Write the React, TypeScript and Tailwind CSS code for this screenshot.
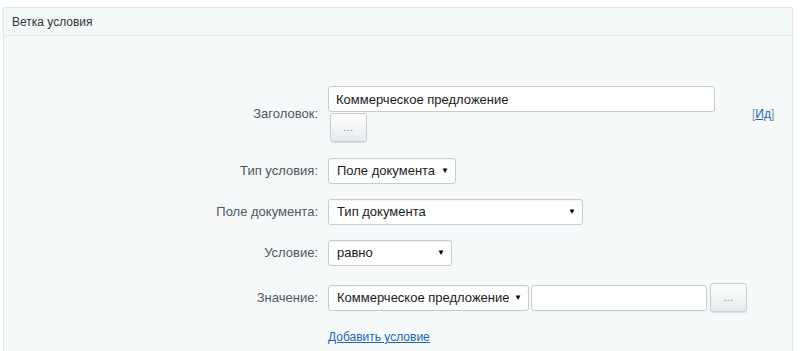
import React from 'react';

const font = { fontFamily: '"Liberation Sans", Arial, sans-serif' };

const Select: React.FC<{ value: string; width: string }> = ({ value, width }) => (
  <div
    className={`${width} h-[26px] flex items-center justify-between pl-[8px] pr-[6px] bg-white border border-[#c6cbcf] rounded-[3px] text-[13px] text-[#1b1b1b] shadow-[inset_0_1px_1px_rgba(0,0,0,0.04)]`}
  >
    <span className="whitespace-nowrap overflow-hidden">{value}</span>
    <span className="text-[8px] text-black ml-[3px]">▼</span>
  </div>
);

const DotsButton: React.FC<{ className?: string }> = ({ className }) => (
  <button
    className={`h-[29px] flex items-center justify-center rounded-[3px] border border-[#c9cdd0] bg-gradient-to-b from-white to-[#e6eaec] text-[10px] tracking-wider text-[#6a737b] shadow-[0_1px_1px_rgba(0,0,0,0.12)] ${className ?? ''}`}
  >
    ...
  </button>
);

const Row: React.FC<{ label: string; children: React.ReactNode; right?: React.ReactNode; className?: string }> = ({
  label,
  children,
  right,
  className,
}) => (
  <div className={`flex items-center ${className ?? ''}`}>
    <div className="w-[324px] pr-[10px] text-right text-[13px] text-[#4f565d]">{label}</div>
    <div className="flex-1">{children}</div>
    {right}
  </div>
);

export default function App() {
  return (
    <div className="w-[800px] h-[351px] bg-white pt-[7px] pl-[3px] pr-[7px]" style={font}>
      <div className="h-[344px] border border-[#e1e7e9] border-b-0 bg-[#f6f9f9] flex flex-col">
        <div className="h-[28px] flex items-center px-[8px] text-[12px] text-[#333] border-b border-[#e3e8ea] bg-[#f3f8f8]">
          Ветка условия
        </div>

        <div className="pt-[50px] flex flex-col">
          {/* title */}
          <Row
            label="Заголовок:"
            right={
              <div className="w-[40px] text-[12px] text-[#8a9095] pr-[10px]">
                [<a href="#" className="text-[#2067b0] underline">Ид</a>]
              </div>
            }
          >
            <div className="flex flex-col gap-[1px]">
              <input
                readOnly
                value="Коммерческое предложение"
                className="w-[387px] h-[26px] px-[7px] bg-white border border-[#c6cbcf] rounded-[3px] text-[13px] text-[#1b1b1b] outline-none"
              />
              <DotsButton className="w-[37px] ml-[2px]" />
            </div>
          </Row>

          <Row label="Тип условия:" className="mt-[16px]">
            <Select value="Поле документа" width="w-[128px]" />
          </Row>

          <Row label="Поле документа:" className="mt-[15px]">
            <Select value="Тип документа" width="w-[255px]" />
          </Row>

          <Row label="Условие:" className="mt-[15px]">
            <Select value="равно" width="w-[124px]" />
          </Row>

          <Row label="Значение:" className="mt-[17px]">
            <div className="flex items-center gap-[2px]">
              <Select value="Коммерческое предложение" width="w-[201px]" />
              <input
                readOnly
                className="w-[176px] h-[26px] bg-white border border-[#c6cbcf] rounded-[3px] outline-none"
              />
              <DotsButton className="w-[37px] ml-[1px]" />
            </div>
          </Row>

          <div className="pl-[324px] mt-[12px]">
            <a href="#" className="text-[12px] text-[#2067b0] underline">
              Добавить условие
            </a>
          </div>
        </div>
      </div>
    </div>
  );
}
